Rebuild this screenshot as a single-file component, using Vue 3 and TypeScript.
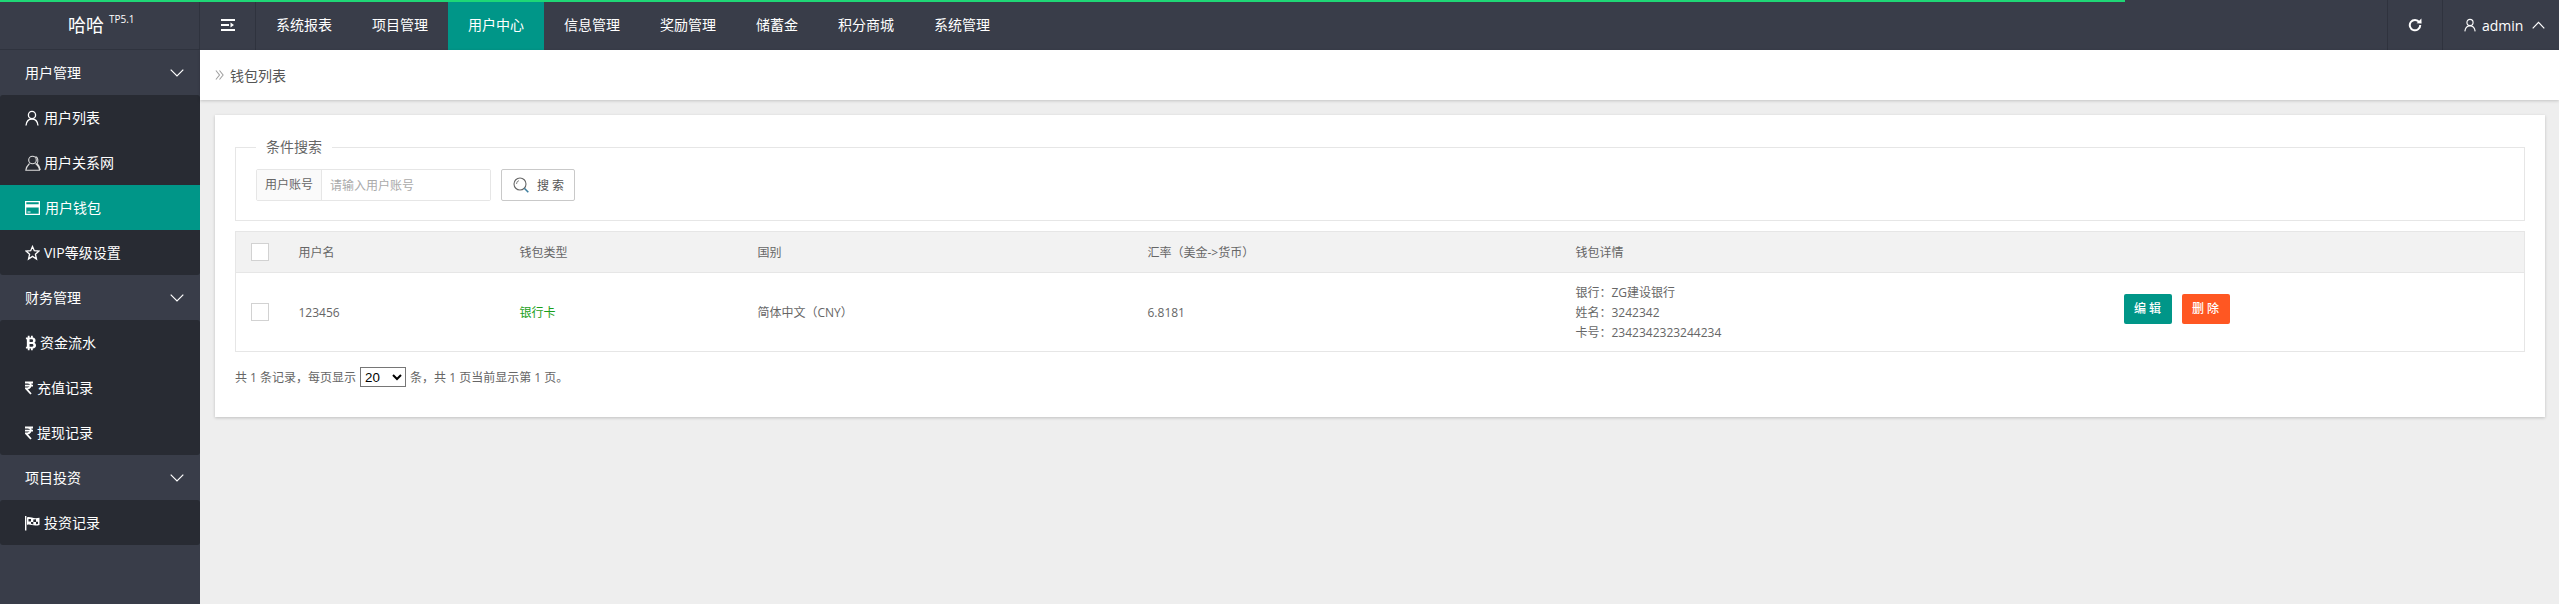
<template>
  <div class="page">
    <div class="progress"></div>

    <header class="topbar">
      <div class="logo">哈哈<sup>TP5.1</sup></div>
      <div class="toggle">
        <svg class="toggle-icon" viewBox="0 0 14 12"><path d="M0 0h14v2H0zM0 10h14v2H0zM0 5h8v2H0zM9.500 3.500 13 6l-3.500 2.500z" /></svg>
      </div>
      <nav class="topnav">
        <a v-for="n in navItems" :key="n" class="topnav-item" :class="{ on: n === '用户中心' }">{{ n }}</a>
      </nav>
      <div class="tool refresh">
        <svg viewBox="0 0 14 14" width="14" height="14"><path d="M11.300 4.200A5.200 5.200 0 1 0 12.200 7" fill="none" stroke="#fff" stroke-width="2" /><path d="M8.600 5.200 13.600 5.400 13.400.6z" fill="#fff" /></svg>
      </div>
      <div class="tool user">
        <svg class="ic" viewBox="0 0 14 16" width="12" height="14" v-html="icons.user"></svg>
        <span class="admin">admin</span>
        <svg viewBox="0 0 13 8" width="13" height="8"><path d="M.7 7.300 6.500 1.300 12.300 7.300" fill="none" stroke="#fff" stroke-width="1.200" /></svg>
      </div>
    </header>

    <div class="body">
      <aside class="side">
        <template v-for="g in menu" :key="g.title">
          <div class="group">
            <span class="lift">{{ g.title }}</span>
            <svg viewBox="0 0 14 8" width="14" height="8"><path d="M.7.7 7 7 13.300.7" fill="none" stroke="#fff" stroke-width="1.200" /></svg>
          </div>
          <ul class="sub">
            <li v-for="m in g.items" :key="m.label" class="sub-item" :class="{ on: m.label === '用户钱包' }">
              <span class="slot" :style="{ width: m.slot + 'px' }">
                <svg class="ic" :viewBox="m.box" :width="m.w" height="16" v-html="icons[m.icon]"></svg>
              </span>
              <span class="lift">{{ m.label }}</span>
            </li>
          </ul>
        </template>
      </aside>

      <main class="main">
        <div class="crumb">
          <svg viewBox="0 0 10 12" width="9" height="12"><path d="M1 1 5 6 1 11M5 1 9 6 5 11" fill="none" stroke="#a0a0a0" stroke-width="1.200" /></svg>
          <span>钱包列表</span>
        </div>

        <section class="card">
          <fieldset class="filter">
            <legend>条件搜索</legend>
            <div class="filter-row">
              <div class="input-group">
                <label>用户账号</label>
                <input type="text" placeholder="请输入用户账号" />
              </div>
              <button class="search" type="button">
                <svg viewBox="0 0 16 16" width="16" height="16"><circle cx="7" cy="7" r="6" fill="none" stroke="#666" stroke-width="1.100" /><path d="M11.300 11.300 15.300 15.300" stroke="#3f7f9f" stroke-width="1.600" /><path d="M3.500 7A3.500 3.500 0 0 1 6 3.600" fill="none" stroke="#888" /></svg>
                搜 索
              </button>
            </div>
          </fieldset>

          <table class="list">
            <colgroup>
              <col v-for="w in colWidths" :key="w" :style="{ width: w + 'px' }" />
              <col />
            </colgroup>
            <thead>
              <tr>
                <th class="check"><i class="box"></i></th>
                <th>用户名</th>
                <th>钱包类型</th>
                <th>国别</th>
                <th>汇率（美金->货币）</th>
                <th>钱包详情</th>
                <th></th>
              </tr>
            </thead>
            <tbody>
              <tr>
                <td class="check"><i class="box"></i></td>
                <td>123456</td>
                <td class="green">银行卡</td>
                <td>简体中文（CNY）</td>
                <td>6.8181</td>
                <td>
                  <div>银行：ZG建设银行</div>
                  <div>姓名：3242342</div>
                  <div>卡号：2342342323244234</div>
                </td>
                <td class="ops">
                  <button class="btn edit" type="button">编 辑</button>
                  <button class="btn del" type="button">删 除</button>
                </td>
              </tr>
            </tbody>
          </table>

          <div class="pager">
            <span>共 1 条记录，每页显示</span>
            <select>
              <option>20</option>
            </select>
            <span>条，共 1 页当前显示第 1 页。</span>
          </div>
        </section>
      </main>
    </div>
  </div>
</template>

<script setup lang="ts">
interface SubItem {
  label: string;
  icon: string;
  box: string;
  w: number;
  slot: number;
}

const navItems = ["系统报表", "项目管理", "用户中心", "信息管理", "奖励管理", "储蓄金", "积分商城", "系统管理"];
const colWidths = [48, 221, 238, 390, 428, 548];

const icons: Record<string, string> = {
  user: '<circle cx="7" cy="5" r="3.6" fill="none" stroke="#fff" stroke-width="1.300"/><path d="M1 15.500C1.500 11 4 9 7 9s5.500 2 6 6.500" fill="none" stroke="#fff" stroke-width="1.300"/>',
  group: '<circle cx="7.500" cy="5" r="3.800" fill="none" stroke="#ddd" stroke-width="1.100"/><path d="M4.500 8.500C3 10 1 12 .8 15.300H14.500C14.300 12 12.500 10 10.500 8.500M10.500 1.600C13 1.800 13.500 6.500 12 8.500 13.500 10 15 12 15.300 15" fill="none" stroke="#ddd" stroke-width="1.100"/>',
  card: '<path fill-rule="evenodd" d="M0 1h15v14H0zM1.300 2.300v2h12.400v-2zM1.300 7.500v6.200h12.400V7.500zM2.500 11.500h3v1h-3z" fill="#fff"/>',
  star: '<path d="M7.500 1.500 9.300 5.700 14 6.100 10.400 9.200 11.500 14 7.500 11.400 3.500 14 4.600 9.200 1 6.100 5.700 5.700Z" fill="none" stroke="#fff" stroke-width="1.300"/>',
  btc: '<path fill-rule="evenodd" d="M3 0h2v2h1.500V0h2v2.100C10.500 2.400 11.500 3.600 11.500 5.200c0 1.200-.5 2-1.400 2.600 1.200.5 1.900 1.500 1.900 2.900 0 2-1.300 3-3.500 3.200V16h-2v-2H5v2H3v-2H1v-2h1V4H1V2h2zM5 4v3h2.500C8.300 7 8.800 6.400 8.800 5.500S8.300 4 7.500 4zM5 9v3h2.800c.9 0 1.400-.6 1.400-1.500S8.700 9 7.800 9z" fill="#fff"/>',
  rupee: '<path d="M0 1.500h8M0 4.700h8M.2 1.500h2.300c2.600 0 3.300 1.400 3.300 2.600S4.800 7.300 2.500 7.400H1L6 13" fill="none" stroke="#fff" stroke-width="1.800"/>',
  flag: '<path d="M.7 1v14.500" stroke="#fff" stroke-width="1.400"/><path fill-rule="evenodd" d="M2 2.500C5 1 8 4.500 14.500 2.800V10C8 11.800 5 8.500 2 10zM3.500 4v2.500H6V8.800l2.300.6V7H11v2.300l2-.4V6.800h-2V4.300l-2.700.2V7H6V4z" fill="#fff"/>',
};

const menu: { title: string; items: SubItem[] }[] = [
  {
    title: "用户管理",
    items: [
      { label: "用户列表", icon: "user", box: "0 0 14 16", w: 14, slot: 19 },
      { label: "用户关系网", icon: "group", box: "0 0 16 16", w: 16, slot: 19 },
      { label: "用户钱包", icon: "card", box: "0 0 15 16", w: 15, slot: 20 },
      { label: "VIP等级设置", icon: "star", box: "0 0 15 16", w: 15, slot: 19 },
    ],
  },
  {
    title: "财务管理",
    items: [
      { label: "资金流水", icon: "btc", box: "0 0 12 16", w: 11, slot: 15 },
      { label: "充值记录", icon: "rupee", box: "0 0 8 14", w: 8, slot: 12 },
      { label: "提现记录", icon: "rupee", box: "0 0 8 14", w: 8, slot: 12 },
    ],
  },
  {
    title: "项目投资",
    items: [{ label: "投资记录", icon: "flag", box: "0 0 15 16", w: 15, slot: 19 }],
  },
];
</script>

<style>
html,
body {
  margin: 0;
  background: #eee;
}
</style>

<style scoped>
.page {
  position: relative;
  min-height: 604px;
  font-family: "Open Sans", "Noto Sans CJK SC", sans-serif;
  font-size: 14px;
  color: #666;
  background: #eee;
}
.progress {
  position: absolute;
  top: 0;
  left: 0;
  width: 2125px;
  height: 2px;
  background: #1fd776;
}

.topbar {
  display: flex;
  height: 50px;
  background: #393d49;
  color: #fff;
}
.logo {
  width: 200px;
  box-sizing: border-box;
  border-right: 1px solid #2f333e;
  border-bottom: 1px solid #2f333e;
  padding-left: 68px;
  font-size: 18px;
  line-height: 50px;
}
.logo sup {
  margin-left: 5px;
  font-size: 10px;
  line-height: 1;
  vertical-align: 9px;
}
.toggle {
  display: flex;
  align-items: center;
  justify-content: center;
  width: 56px;
  box-sizing: border-box;
  border-right: 1px solid #2f333e;
}
.toggle-icon {
  width: 14px;
  height: 12px;
  fill: #fff;
}
.topnav {
  display: flex;
  flex: 1;
}
.topnav-item {
  padding: 0 20px;
  line-height: 50px;
  color: #fff;
}
.topnav-item.on {
  background: #009688;
}
.tool {
  display: flex;
  align-items: center;
  box-sizing: border-box;
  border-left: 1px solid #2f333e;
}
.refresh {
  justify-content: center;
  width: 55px;
}
.user {
  width: 117px;
  padding-left: 21px;
  gap: 6px;
}
.admin {
  margin-right: 3px;
}

.body {
  display: flex;
  min-height: 554px;
}
.side {
  flex: 0 0 200px;
  background: #393d49;
  color: #fff;
}
.group {
  display: flex;
  align-items: center;
  justify-content: space-between;
  height: 45px;
  padding: 0 16px 0 25px;
}
.lift {
  margin-bottom: 2px;
}
.sub {
  margin: 0;
  padding: 0;
  list-style: none;
  background: #282b33;
  border-radius: 3px;
}
.sub-item {
  display: flex;
  align-items: center;
  height: 45px;
  padding-left: 25px;
}
.sub-item.on {
  background: #009688;
}
.slot {
  display: inline-flex;
  align-items: center;
}

.main {
  flex: 1;
  min-width: 0;
}
.crumb {
  display: flex;
  align-items: center;
  gap: 6px;
  height: 50px;
  padding-left: 15px;
  background: #fff;
  box-shadow: 0 1px 3px rgba(0, 0, 0, 0.18);
  color: #555;
}
.card {
  margin: 15px 14px 0 15px;
  padding: 22px 20px 30px;
  background: #fff;
  box-shadow: 0 1px 3px rgba(0, 0, 0, 0.2);
}
.filter {
  margin: 0 0 10px;
  padding: 12px 20px 19px;
  border: 1px solid #e6e6e6;
}
.filter legend {
  padding: 0 10px;
  line-height: 20px;
  color: #666;
}
.filter-row {
  display: flex;
  gap: 10px;
}
.input-group {
  display: flex;
  width: 235px;
  height: 32px;
  box-sizing: border-box;
  border: 1px solid #e6e6e6;
  border-radius: 2px;
  font-size: 12px;
}
.input-group label {
  width: 65px;
  box-sizing: border-box;
  border-right: 1px solid #e6e6e6;
  background: #fafafa;
  line-height: 30px;
  text-align: center;
}
.input-group input {
  flex: 1;
  min-width: 0;
  padding: 0 8px;
  border: 0;
  outline: 0;
  font: inherit;
}
.input-group input::placeholder {
  color: #aaa;
}
.search {
  display: flex;
  align-items: center;
  gap: 8px;
  width: 74px;
  height: 32px;
  padding: 0 0 0 11px;
  border: 1px solid #c9c9c9;
  border-radius: 2px;
  background: #fff;
  color: #555;
  font: inherit;
  font-size: 12px;
}

.list {
  width: 100%;
  table-layout: fixed;
  border-collapse: collapse;
  border: 1px solid #e6e6e6;
  font-size: 12px;
}
.list th {
  height: 40px;
  padding: 0 15px;
  background: #f2f2f2;
  border-bottom: 1px solid #e6e6e6;
  font-weight: 400;
  text-align: left;
}
.list td {
  height: 78px;
  padding: 10px 15px 8px;
  box-sizing: border-box;
  line-height: 20px;
}
.list .check {
  padding: 0 0 0 15px;
}
.list .ops {
  padding: 21px 15px 0;
  vertical-align: top;
  white-space: nowrap;
}
.box {
  display: block;
  width: 18px;
  height: 18px;
  box-sizing: border-box;
  border: 1px solid #d2d2d2;
  background: #fff;
}
.green {
  color: #1aa01a;
}
.btn {
  width: 48px;
  height: 30px;
  padding: 0;
  margin-right: 10px;
  border: 0;
  border-radius: 2px;
  color: #fff;
  font: inherit;
  font-weight: 500;
}
.edit {
  background: #009688;
}
.del {
  background: #ff5722;
}

.pager {
  display: flex;
  align-items: center;
  gap: 4px;
  margin-top: 15px;
  font-size: 12px;
}
.pager select {
  width: 46px;
  height: 20px;
  padding: 0;
  background: #fff;
  font-family: "Liberation Sans", sans-serif;
  font-size: 13.330px;
}
</style>
